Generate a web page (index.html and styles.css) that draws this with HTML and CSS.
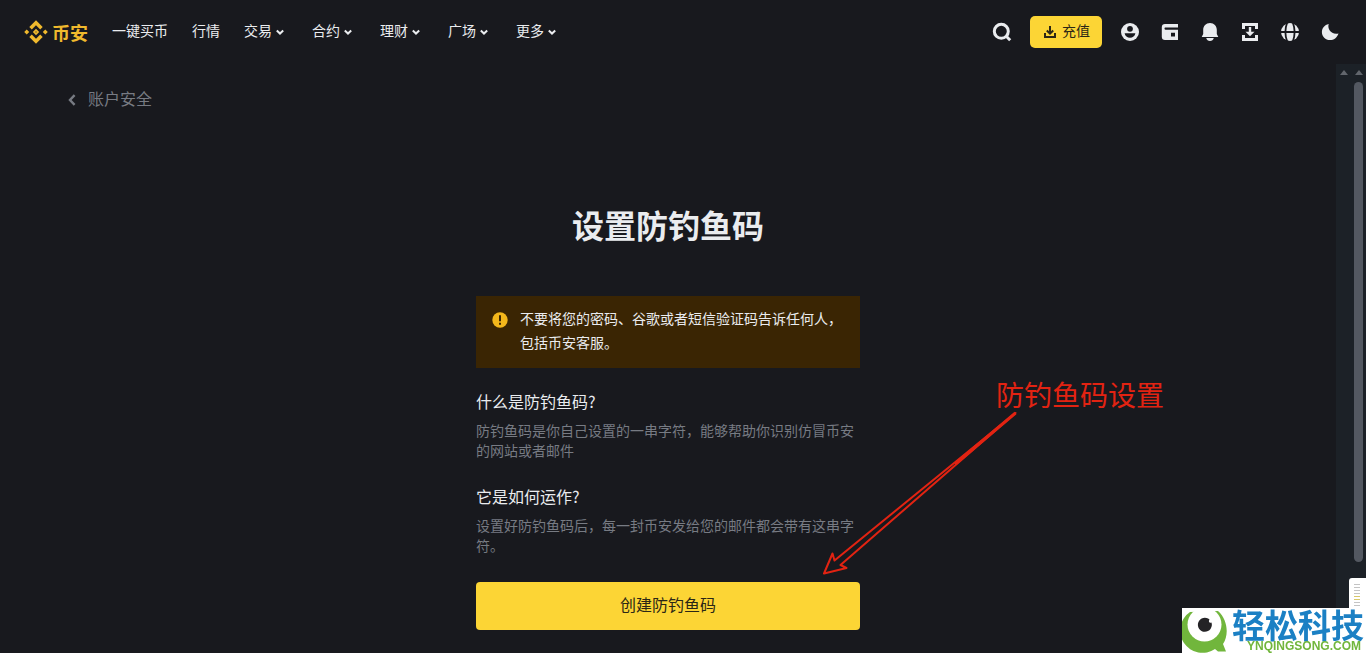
FILE: index.html
```html
<!DOCTYPE html>
<html lang="zh-CN">
<head>
<meta charset="utf-8">
<meta name="viewport" content="width=device-width, initial-scale=1">
<title>设置防钓鱼码</title>
<link rel="stylesheet" href="styles.css">
</head>
<body>
<svg class="defs" aria-hidden="true">
  <symbol id="chevron" viewBox="0 0 16 16"><path d="M4.8 6.600 8 9.600l3.200-3" fill="none" stroke="currentColor" stroke-width="2"/></symbol>
</svg>
<header class="header">
  <a class="logo" href="#">
    <svg class="icon" viewBox="0 0 24 24" fill="currentColor" aria-hidden="true"><path d="M12 .2 18.700 6.900 16.200 9.400 12 5.200 7.800 9.400 5.300 6.900zM12 23.800l6.700-6.700-2.500-2.500-4.200 4.200-4.200-4.200-2.500 2.500zM2.700 9.500 5.200 12l-2.500 2.500L.2 12zM21.300 9.500l2.500 2.500-2.500 2.500-2.500-2.500zM12 8.800l3.200 3.200-3.200 3.200L8.800 12z"/><circle cx="12" cy="12" r=".8" fill="#7b6321"/></svg>
    <span>币安</span>
  </a>
  <nav class="nav">
    <a href="#">一键买币</a>
    <a href="#">行情</a>
    <a href="#">交易<svg class="chevron"><use href="#chevron"/></svg></a>
    <a href="#">合约<svg class="chevron"><use href="#chevron"/></svg></a>
    <a href="#">理财<svg class="chevron"><use href="#chevron"/></svg></a>
    <a href="#">广场<svg class="chevron"><use href="#chevron"/></svg></a>
    <a href="#">更多<svg class="chevron"><use href="#chevron"/></svg></a>
  </nav>
  <div class="tools">
    <button class="tool" aria-label="搜索"><svg class="icon" viewBox="0 0 24 24" fill="none" stroke="currentColor" stroke-width="3"><circle cx="11.300" cy="11.300" r="7"/><path d="m16 16 4.200 4.200"/></svg></button>
    <button class="deposit"><svg class="deposit-icon" viewBox="0 0 16 16" fill="none" stroke="currentColor" stroke-width="2" aria-hidden="true"><path d="M8 2v7.500M4.800 6.500 8 9.700l3.200-3.200M3 9v4h10V9"/></svg><span>充值</span></button>
    <button class="tool" aria-label="账户"><svg class="icon" viewBox="0 0 24 24"><circle cx="12" cy="12" r="9" fill="currentColor"/><circle cx="12" cy="8.800" r="2.900" fill="#18191e"/><path d="M6.600 13.300h10.800c-.5 2.900-2.700 4.500-5.400 4.500s-4.900-1.600-5.400-4.500z" fill="#18191e"/></svg></button>
    <button class="tool" aria-label="钱包"><svg class="icon" viewBox="0 0 24 24"><path d="M7 4h13v16H7c-2 0-3.200-1.200-3.200-3V7c0-1.800 1.200-3 3.200-3z" fill="currentColor"/><path d="M7 7.500h13v2.300H7.700C6.300 9.800 6.200 7.900 7 7.500zM13 12.800h4v3.800h-4z" fill="#18191e"/></svg></button>
    <button class="tool" aria-label="通知"><svg class="icon" viewBox="0 0 24 24" fill="currentColor"><path d="M12 3c4 0 6.800 3 6.800 6.800V14l1.500 3H3.700l1.500-3V9.800C5.200 6 8 3 12 3zM8.200 18h7.600c-.5 2-1.900 3-3.800 3s-3.300-1-3.800-3z"/></svg></button>
    <button class="tool" aria-label="下载"><svg class="icon" viewBox="0 0 24 24" fill="none" stroke="currentColor" stroke-width="3"><path d="M5.500 9V4.500h13V9M5.500 15v4.500h13V15"/><path d="M12 7v7" stroke-width="2.400"/><path d="m7.500 11.700 4.500 4.600 4.500-4.600z" fill="currentColor" stroke="none"/></svg></button>
    <button class="tool" aria-label="语言"><svg class="icon" viewBox="0 0 24 24"><circle cx="12" cy="12" r="9" fill="currentColor"/><path d="M2 12h20M9.200 2.500C6.900 8.500 6.900 15.500 9.200 21.500M14.800 2.500c2.300 6 2.300 13 0 19" fill="none" stroke="#18191e" stroke-width="1.800"/></svg></button>
    <button class="tool" aria-label="深色模式"><svg class="icon" viewBox="0 0 24 24" fill="currentColor"><path d="M10.700 4C9 8.800 13.500 15.200 20.500 13.400 19 17.700 15.900 20 12 20c-4.600 0-8.100-3.500-8.100-7.800C3.900 8 6.600 5 10.700 4z"/></svg></button>
  </div>
</header>
<div class="viewport">
  <main class="main">
    <a class="back" href="#"><svg class="back-icon" viewBox="0 0 8 12" fill="none" stroke="currentColor" stroke-width="2.400" aria-hidden="true"><path d="M6.600 1.200 2 6l4.600 4.800"/></svg>账户安全</a>
    <section class="panel">
      <h1 class="title">设置防钓鱼码</h1>
      <div class="alert">
        <svg class="alert-icon" viewBox="0 0 16 16" aria-hidden="true"><circle cx="8" cy="8" r="7.700" fill="#f3b71b"/><path d="M7 3.300h2v5.900H7zM7 10.700h2v2H7z" fill="#3b2503"/></svg>
        <p>不要将您的密码、谷歌或者短信验证码告诉任何人，包括币安客服。</p>
      </div>
      <h2 class="question">什么是防钓鱼码?</h2>
      <p class="answer">防钓鱼码是你自己设置的一串字符，能够帮助你识别仿冒币安的网站或者邮件</p>
      <h2 class="question">它是如何运作?</h2>
      <p class="answer">设置好防钓鱼码后，每一封币安发给您的邮件都会带有这串字符。</p>
      <button class="create">创建防钓鱼码</button>
      <div class="note">
        <span class="note-text">防钓鱼码设置</span>
        <svg class="note-arrow" viewBox="0 0 196 164" fill="none" stroke="#e22312" stroke-width="2" stroke-linejoin="round" aria-hidden="true"><path d="M193.500 2 12.500 149.500 10.500 142.500 2 162.500 24.500 157 18.500 154z"/><path d="M193.500 2 133 53" stroke-width="3"/></svg>
      </div>
    </section>
  </main>
  <div class="rail" aria-hidden="true">
    <div class="track"><i class="up"></i></div>
    <div class="track"><i class="up"></i><i class="thumb"></i></div>
  </div>
</div>
<div class="tab" aria-hidden="true"><i></i><i></i><i></i><i></i><i class="gold"></i><i class="gold"></i><i></i><i></i></div>
<aside class="watermark">
  <svg class="eye" viewBox="0 0 46 45" aria-hidden="true"><path d="M8 4A22 22 0 1 0 33 41l3 2.500h8L41 36C47 27 46 12 36 3z" fill="#71b63c"/><circle cx="22.500" cy="16.500" r="17" fill="#fff"/><path d="M27.500 11.500A7 7 0 1 0 29.500 14.500c-2 1-3.500-1-2-3z" fill="#242326"/></svg>
  <div class="brand"><strong>轻松科技</strong><span>YNQINGSONG.COM</span></div>
</aside>
</body>
</html>
```

FILE: styles.css
```css
* { box-sizing: border-box; }

body {
  margin: 0;
  min-height: 100vh;
  display: flex;
  flex-direction: column;
  background: #18191e;
  color: #eaecef;
  font-family: "Noto Sans CJK SC", sans-serif;
  font-size: 14px;
  line-height: 20px;
}

h1, h2, p { margin: 0; }
a { color: inherit; text-decoration: none; }
button { font: inherit; border: 0; padding: 0; cursor: pointer; }
.defs { display: none; }
.icon { display: block; width: 24px; height: 24px; }

.header {
  height: 64px;
  padding: 0 24px;
  display: flex;
  align-items: center;
}

.logo {
  display: flex;
  align-items: center;
  gap: 4px;
  color: #f0b92d;
  font-size: 18px;
  font-weight: 700;
}

.nav {
  display: flex;
  gap: 24px;
  margin-left: 24px;
  padding-bottom: 4px;
}

.nav a { display: flex; align-items: center; white-space: nowrap; }
.chevron { width: 16px; height: 16px; margin-top: 4px; }

.tools {
  display: flex;
  align-items: center;
  gap: 16px;
  margin-left: auto;
}

.tool { background: none; color: #eaecef; }

.deposit {
  display: flex;
  align-items: center;
  gap: 4px;
  height: 32px;
  padding: 0 12px;
  border-radius: 5px;
  background: #fcd535;
  color: #2b2716;
}

.deposit span { padding-bottom: 4px; }
.deposit-icon { width: 16px; height: 16px; }

.viewport { flex: 1; display: flex; }
.main { flex: 1; padding: 24px 68px; }

.back {
  display: inline-flex;
  align-items: center;
  gap: 12px;
  color: #777b83;
  font-size: 16px;
  line-height: 20px;
}

.back-icon { width: 8px; height: 12px; margin-top: 4px; }

.panel {
  position: relative;
  width: 384px;
  max-width: 100%;
  margin: 88px auto 0;
}

.title {
  margin-bottom: 46px;
  text-align: center;
  font-size: 32px;
  line-height: 52px;
  font-weight: 700;
}

.alert {
  display: flex;
  gap: 12px;
  margin-bottom: 22px;
  padding: 10px 16px 14px;
  background: #3a2503;
  line-height: 24px;
}

.alert-icon { flex: none; width: 16px; height: 16px; margin-top: 6px; }

.question {
  margin-bottom: 8px;
  font-size: 16px;
  line-height: 22px;
  font-weight: 400;
}

.answer {
  margin-bottom: 25px;
  color: #777b83;
}

.create {
  width: 100%;
  height: 48px;
  margin-top: 2px;
  padding-bottom: 4px;
  border-radius: 4px;
  background: #fcd535;
  color: #2b2716;
  font-size: 16px;
}

/* Callout drawn over the page, pointing at the button */
.note { position: absolute; left: 346px; top: 179px; color: #e22312; }
.note-text {
  display: block;
  margin-left: 174px;
  font-size: 28px;
  line-height: 34px;
  white-space: nowrap;
}
.note-arrow { display: block; width: 196px; height: 164px; }

.rail { display: flex; width: 30px; background: #1c2127; }
.track { flex: 1; display: flex; flex-direction: column; align-items: center; padding-top: 6px; }
.up {
  border: 4px solid transparent;
  border-top: 0;
  border-bottom: 5px solid #62666d;
}
.thumb { width: 9px; height: 480px; margin-top: 7px; border-radius: 5px; background: #535861; }

.tab {
  position: fixed;
  right: 0;
  bottom: 45px;
  width: 17px;
  height: 30px;
  padding: 6px 5px 0;
  display: flex;
  flex-direction: column;
  gap: 2px;
  border-radius: 3px 0 0 0;
  background: #fff;
}
.tab i { width: 6px; height: 1px; background: #c4c4c4; }
.tab .gold { background: #d8c869; }

.watermark {
  position: fixed;
  right: 0;
  bottom: 0;
  height: 45px;
  display: flex;
  gap: 4px;
  background: #fff;
}
.eye { width: 46px; height: 45px; }
.brand { display: flex; flex-direction: column; align-items: flex-end; padding-right: 2px; }
.brand strong { color: #1b80c4; font-size: 33px; line-height: 32px; font-weight: 700; white-space: nowrap; }
.brand span { padding-right: 3px; color: #71b63c; font-family: "Liberation Sans", sans-serif; font-size: 12px; line-height: 13px; font-weight: 700; }
```
